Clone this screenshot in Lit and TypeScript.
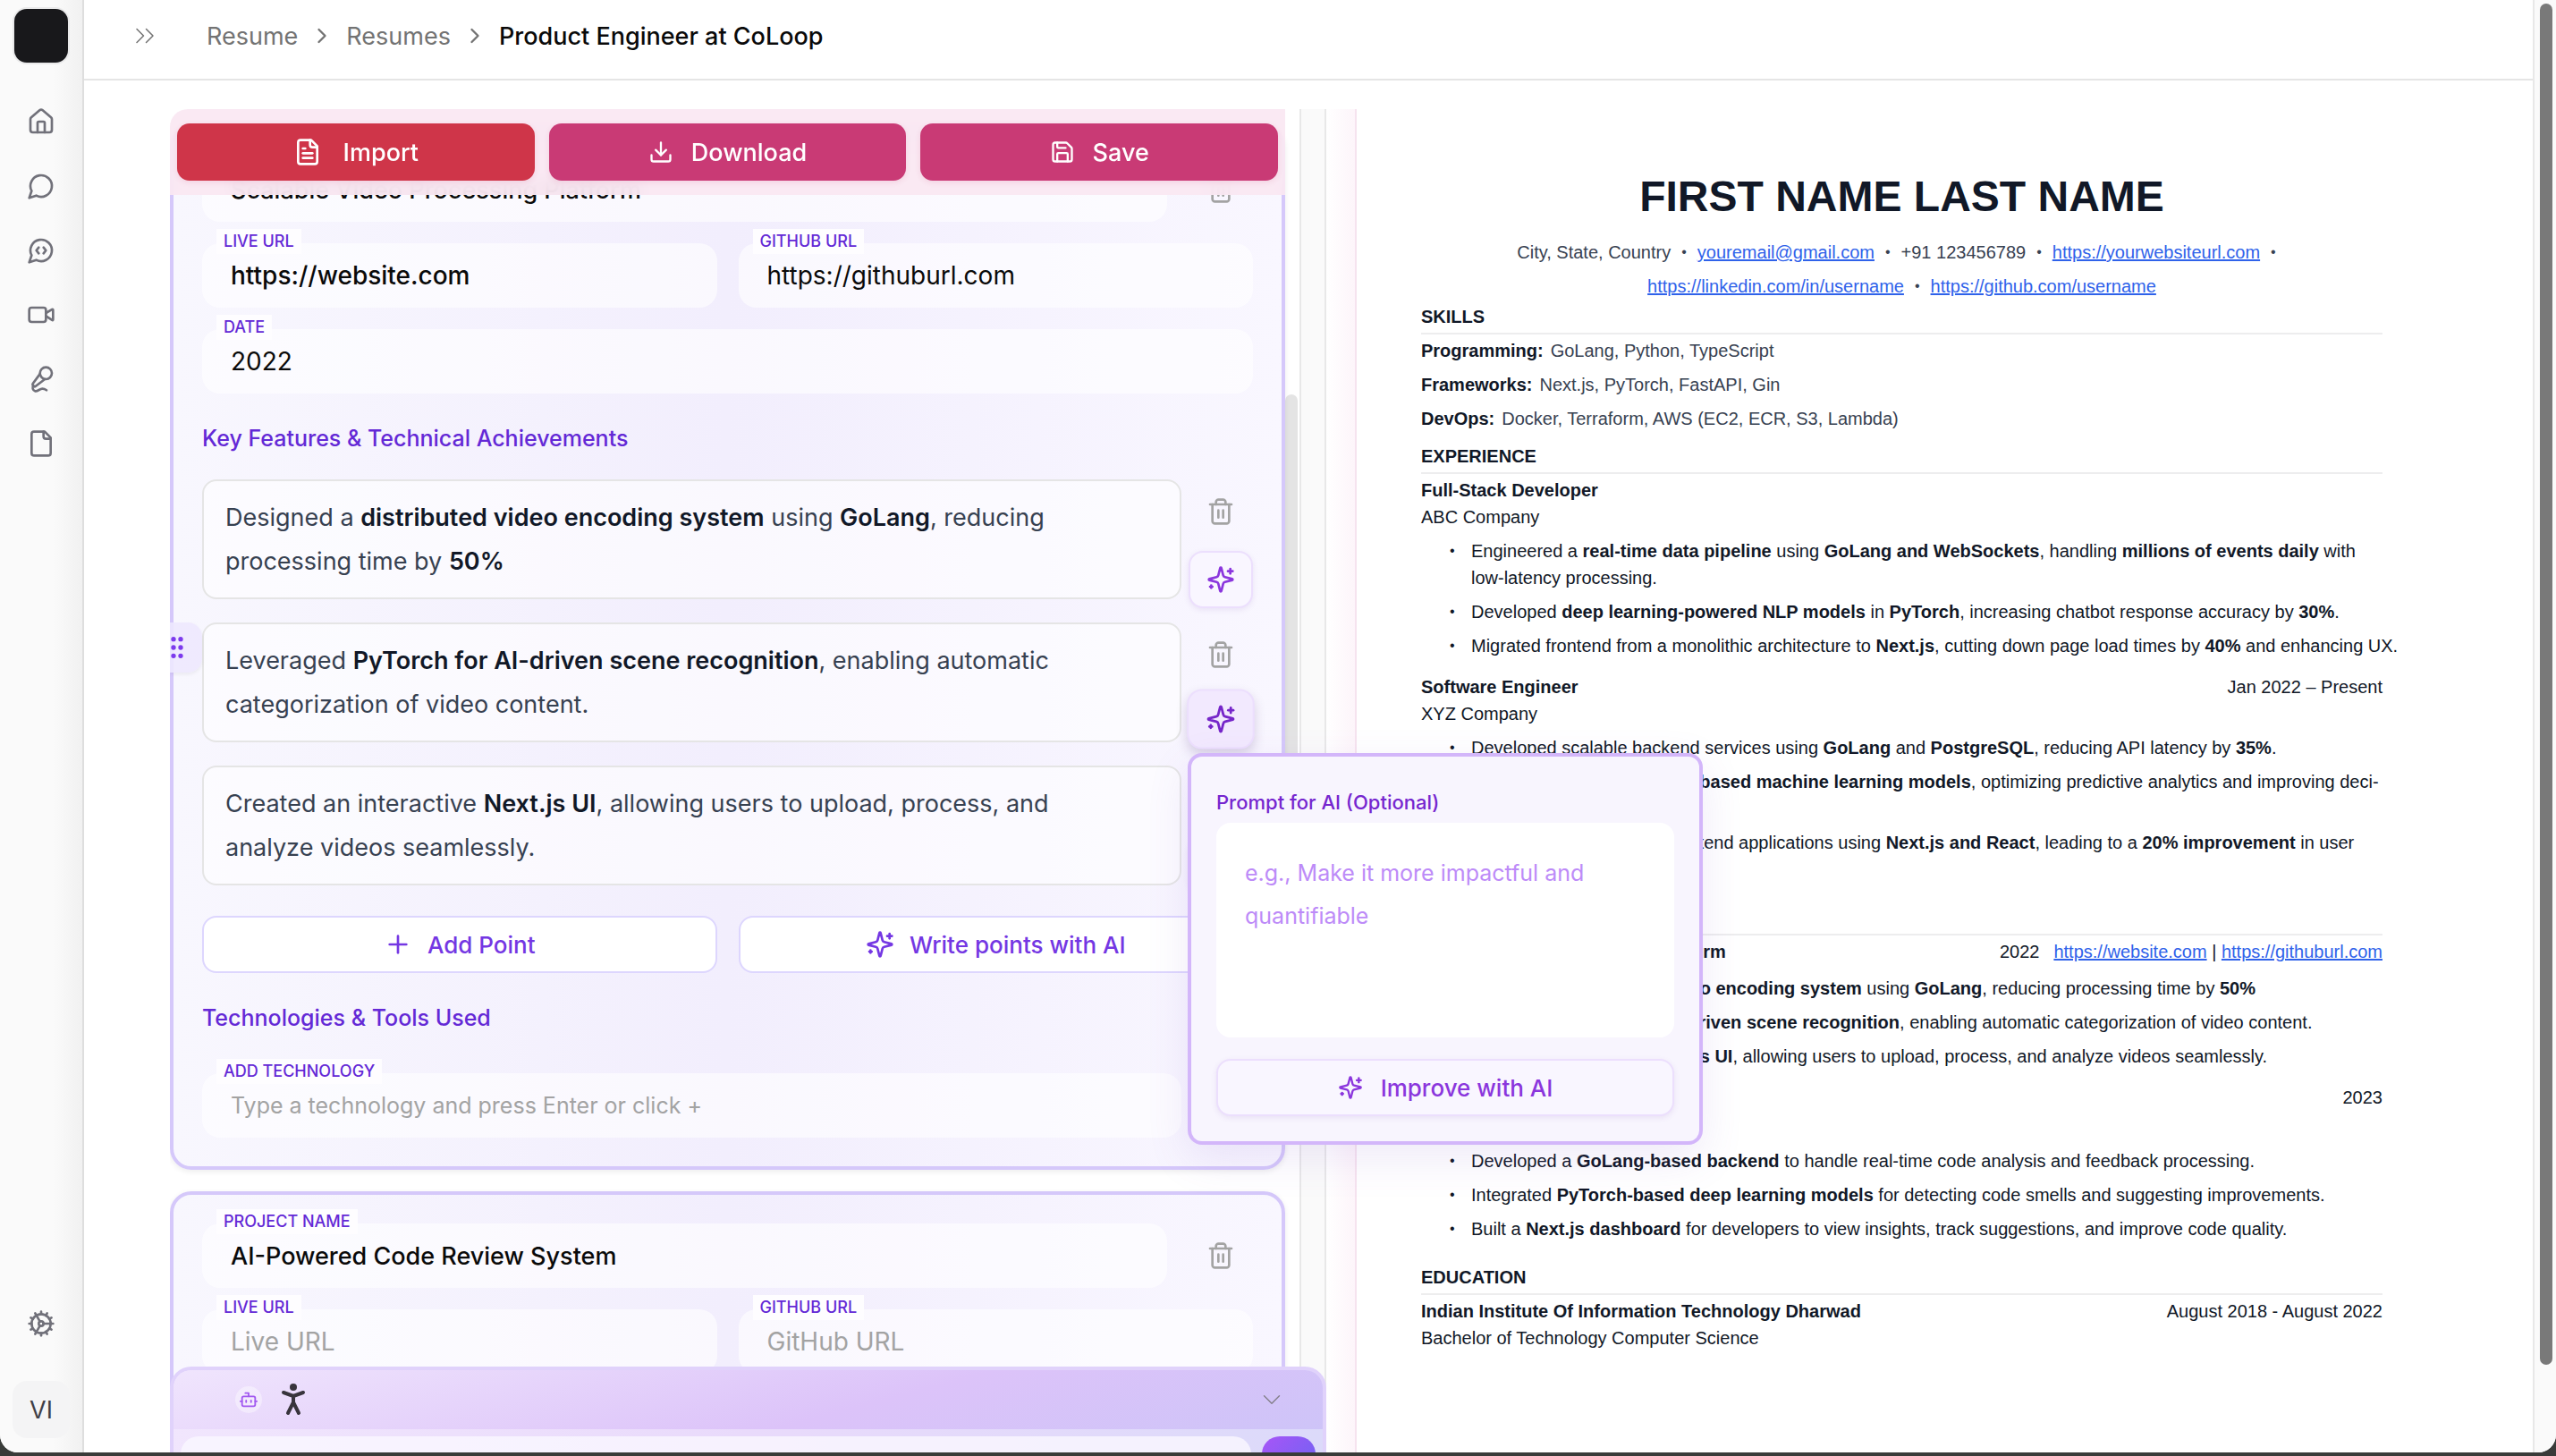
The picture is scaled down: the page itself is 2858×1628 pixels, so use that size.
import { LitElement, html, css, svg, nothing, type TemplateResult } from "lit";
import { customElement, property } from "lit/decorators.js";
import { classMap } from "lit/directives/class-map.js";

const ICONS = {
  house: svg`<path d="M15 21v-8a1 1 0 0 0-1-1h-4a1 1 0 0 0-1 1v8"/><path d="M3 10a2 2 0 0 1 .709-1.528l7-5.999a2 2 0 0 1 2.582 0l7 5.999A2 2 0 0 1 21 10v9a2 2 0 0 1-2 2H5a2 2 0 0 1-2-2z"/>`,
  message: svg`<path d="M7.9 20A9 9 0 1 0 4 16.1L2 22Z"/>`,
  messageCode: svg`<path d="M10 9.5 8 12l2 2.5"/><path d="m14 9.5 2 2.5-2 2.5"/><path d="M7.9 20A9 9 0 1 0 4 16.1L2 22Z"/>`,
  video: svg`<path d="m16 13 5.223 3.482a.5.5 0 0 0 .777-.416V7.87a.5.5 0 0 0-.752-.432L16 10.5"/><rect x="2" y="6" width="14" height="12" rx="2"/>`,
  mic: svg`<path d="m11 7.601-5.994 8.19a1 1 0 0 0 .1 1.298l.817.818a1 1 0 0 0 1.314.087L15.09 12"/><path d="M16.5 21.174C15.5 20.5 14.372 20 13 20c-2.058 0-3.928 2.356-6 2-2.072-.356-2.775-3.369-1.5-4.5"/><circle cx="16" cy="7" r="5"/>`,
  file: svg`<path d="M15 2H6a2 2 0 0 0-2 2v16a2 2 0 0 0 2 2h12a2 2 0 0 0 2-2V7Z"/><path d="M14 2v4a2 2 0 0 0 2 2h4"/>`,
  fileText: svg`<path d="M15 2H6a2 2 0 0 0-2 2v16a2 2 0 0 0 2 2h12a2 2 0 0 0 2-2V7Z"/><path d="M14 2v4a2 2 0 0 0 2 2h4"/><path d="M10 9H8"/><path d="M16 13H8"/><path d="M16 17H8"/>`,
  cog: svg`<path d="M12 20a8 8 0 1 0 0-16 8 8 0 0 0 0 16Z"/><path d="M12 14a2 2 0 1 0 0-4 2 2 0 0 0 0 4Z"/><path d="M12 2v2"/><path d="M12 22v-2"/><path d="m17 20.66-1-1.73"/><path d="M11 10.27 7 3.34"/><path d="m20.66 17-1.73-1"/><path d="m3.34 7 1.73 1"/><path d="M14 12h8"/><path d="M2 12h2"/><path d="m20.66 7-1.73 1"/><path d="m3.34 17 1.73-1"/><path d="m17 3.34-1 1.73"/><path d="m11 13.73-4 6.93"/>`,
  chevronsRight: svg`<path d="m6 17 5-5-5-5"/><path d="m13 17 5-5-5-5"/>`,
  chevronRight: svg`<path d="m9 18 6-6-6-6"/>`,
  chevronDown: svg`<path d="m6 9 6 6 6-6"/>`,
  download: svg`<path d="M21 15v4a2 2 0 0 1-2 2H5a2 2 0 0 1-2-2v-4"/><path d="m7 10 5 5 5-5"/><path d="M12 15V3"/>`,
  save: svg`<path d="M15.2 3a2 2 0 0 1 1.4.6l3.8 3.8a2 2 0 0 1 .6 1.4V19a2 2 0 0 1-2 2H5a2 2 0 0 1-2-2V5a2 2 0 0 1 2-2z"/><path d="M17 21v-7a1 1 0 0 0-1-1H8a1 1 0 0 0-1 1v7"/><path d="M7 3v4a1 1 0 0 0 1 1h7"/>`,
  trash: svg`<path d="M3 6h18"/><path d="M19 6v14c0 1-1 2-2 2H7c-1 0-2-1-2-2V6"/><path d="M8 6V4c0-1 1-2 2-2h4c1 0 2 1 2 2v2"/><path d="M10 11v6"/><path d="M14 11v6"/>`,
  sparkles: svg`<path d="M9.937 15.5A2 2 0 0 0 8.5 14.063l-6.135-1.582a.5.5 0 0 1 0-.962L8.5 9.936A2 2 0 0 0 9.937 8.5l1.582-6.135a.5.5 0 0 1 .963 0L14.063 8.5A2 2 0 0 0 15.5 9.937l6.135 1.581a.5.5 0 0 1 0 .964L15.5 14.063a2 2 0 0 0-1.437 1.437l-1.582 6.135a.5.5 0 0 1-.963 0z"/><path d="M20 3v4"/><path d="M22 5h-4"/><path d="M4 17v2"/><path d="M5 18H3"/>`,
  plus: svg`<path d="M5 12h14"/><path d="M12 5v14"/>`,
  grip: svg`<circle cx="9" cy="12" r="1"/><circle cx="9" cy="5" r="1"/><circle cx="9" cy="19" r="1"/><circle cx="15" cy="12" r="1"/><circle cx="15" cy="5" r="1"/><circle cx="15" cy="19" r="1"/>`,
  bot: svg`<path d="M12 8V4H8"/><rect width="16" height="12" x="4" y="8" rx="2"/><path d="M2 14h2"/><path d="M20 14h2"/><path d="M15 13v2"/><path d="M9 13v2"/>`,
};

type IconName = keyof typeof ICONS;

const icon = (name: IconName, size = 32, stroke = 2) => html`<svg
  width=${size}
  height=${size}
  viewBox="0 0 24 24"
  fill="none"
  stroke="currentColor"
  stroke-width=${stroke}
  stroke-linecap="round"
  stroke-linejoin="round"
  aria-hidden="true"
>${ICONS[name]}</svg>`;

const reset = css`
  :host,
  *,
  *::before,
  *::after {
    box-sizing: border-box;
  }
  button,
  input,
  textarea {
    font: inherit;
    color: inherit;
    margin: 0;
    border: 0;
    background: none;
    outline: none;
  }
  svg {
    display: block;
    flex: none;
  }
  a {
    color: inherit;
  }
  h1, h2, h3, p, ul {
    margin: 0;
    padding: 0;
  }
`;

@customElement("side-nav")
class SideNav extends LitElement {
  static styles = [
    reset,
    css`
      :host {
        display: flex;
        flex-direction: column;
        align-items: center;
        flex: none;
        width: 94px;
        padding: 10px 0 16px;
        border-right: 2px solid #dedede;
        background: linear-gradient(to right, #fafafa 65%, #f1f1f1);
        color: #71717a;
      }
      .logo {
        width: 60px;
        height: 60px;
        border-radius: 14px;
        background: #18181b;
        box-shadow: 0 0 0 2px #e9e9ea;
      }
      .links {
        display: flex;
        flex-direction: column;
        gap: 40px;
        margin-top: 50px;
        flex: 1;
      }
      .settings {
        margin-bottom: 48px;
      }
      .avatar {
        width: 64px;
        height: 64px;
        border-radius: 16px;
        background: #f4f4f5;
        color: #3f3f46;
        font-size: 27px;
      }
    `,
  ];

  render() {
    const links: [IconName, string][] = [
      ["house", "Home"],
      ["message", "Chat"],
      ["messageCode", "Code chat"],
      ["video", "Video"],
      ["mic", "Interview"],
      ["file", "Documents"],
    ];
    return html`
      <div class="logo"></div>
      <nav class="links">
        ${links.map(([name, label]) => html`<a href="#" aria-label=${label}>${icon(name)}</a>`)}
      </nav>
      <a class="settings" href="#" aria-label="Settings">${icon("cog")}</a>
      <button class="avatar">VI</button>
    `;
  }
}

@customElement("top-bar")
class TopBar extends LitElement {
  static styles = [
    reset,
    css`
      :host {
        display: flex;
        align-items: center;
        flex: none;
        height: 90px;
        padding: 0 50px 8px;
        border-bottom: 2px solid #e5e5e5;
        color: #737373;
        font-size: 27px;
      }
      .toggle {
        padding: 0;
      }
      .crumbs {
        display: flex;
        align-items: center;
        gap: 13px;
        margin-left: 51px;
      }
      .crumbs a {
        text-decoration: none;
      }
      .current {
        color: #0a0a0a;
        font-weight: 500;
      }
    `,
  ];

  render() {
    return html`
      <button class="toggle" aria-label="Expand sidebar">${icon("chevronsRight", 36, 1)}</button>
      <nav class="crumbs">
        <a href="#">Resume</a>${icon("chevronRight", 28, 2)}
        <a href="#">Resumes</a>${icon("chevronRight", 28, 2)}
        <span class="current">Product Engineer at CoLoop</span>
      </nav>
    `;
  }
}

@customElement("text-field")
class TextField extends LitElement {
  @property() label = "";
  @property() value = "";
  @property() placeholder = "";
  @property() size: "small" | "medium" | "large" = "large";
  @property({ type: Boolean }) strong = false;

  static styles = [
    reset,
    css`
      :host {
        display: block;
        position: relative;
        min-width: 0;
      }
      label {
        position: absolute;
        left: 16px;
        top: -16px;
        padding: 0 8px;
        background: #fefdff;
        color: #6429d6;
        font-size: 18px;
        font-weight: 500;
        line-height: 28px;
        text-transform: uppercase;
      }
      input {
        display: block;
        width: 100%;
        height: 72px;
        padding: 0 32px;
        border-radius: 20px;
        background: rgba(255, 255, 255, 0.6);
        color: #0a0a0a;
        font-size: 28px;
      }
      input.strong {
        font-weight: 500;
      }
      input.medium {
        font-size: 27px;
      }
      input.small {
        font-size: 25px;
      }
      input::placeholder {
        color: #a3a3a3;
        opacity: 1;
      }
    `,
  ];

  render() {
    return html`
      <input
        id="field"
        type="text"
        class=${classMap({ strong: this.strong, [this.size]: true })}
        .value=${this.value}
        placeholder=${this.placeholder || nothing}
      />
      <label for="field">${this.label}</label>
    `;
  }
}

interface Point {
  body: TemplateResult;
  active?: boolean;
}

const POINTS: Point[] = [
  { body: html`Designed a <b>distributed video encoding system</b> using <b>GoLang</b>, reducing processing time by <b>50%</b>` },
  { body: html`Leveraged <b>PyTorch for AI-driven scene recognition</b>, enabling automatic categorization of video content.`, active: true },
  { body: html`Created an interactive <b>Next.js UI</b>, allowing users to upload, process, and analyze videos seamlessly.` },
];

@customElement("resume-editor")
class ResumeEditor extends LitElement {
  static styles = [
    reset,
    css`
      :host {
        display: flex;
        flex-direction: column;
        position: relative;
        min-width: 0;
        min-height: 0;
      }
      .toolbar {
        display: grid;
        grid-template-columns: repeat(3, 1fr);
        gap: 16px;
        position: absolute;
        z-index: 2;
        top: 0;
        left: 0;
        right: 16px;
        padding: 16px 8px;
        border-top-left-radius: 20px;
        background: rgba(250, 231, 242, 0.92);
        backdrop-filter: blur(8px);
      }
      .toolbar button {
        display: flex;
        align-items: center;
        justify-content: center;
        gap: 20px;
        height: 64px;
        border-radius: 14px;
        background: #c93a75;
        box-shadow: 0 2px 6px rgba(190, 30, 90, 0.12);
        color: #fff;
        font-size: 27px;
        font-weight: 500;
      }
      .toolbar .import {
        gap: 24px;
        background: #cf3549;
      }
      .scroll {
        display: flex;
        flex: 1;
        min-height: 0;
        overflow: hidden;
      }
      .cards {
        display: flex;
        flex-direction: column;
        gap: 24px;
        flex: 1;
        min-width: 0;
        padding-top: 18px;
      }
      .gutter {
        flex: none;
        width: 16px;
        padding-top: 319px;
      }
      .thumb {
        width: 14px;
        height: 640px;
        border-radius: 7px;
        background: #e4e4e4;
      }
      .card {
        display: flex;
        flex-direction: column;
        gap: 24px;
        flex: none;
        position: relative;
        padding: 32px;
        border: 4px solid #d5c8fa;
        border-radius: 24px;
        background: linear-gradient(to right, #f8f7fe, #f2eefd 50%, #f9f7ff);
        box-shadow: 0 2px 6px rgba(0, 0, 0, 0.08);
      }
      .name-row {
        display: grid;
        grid-template-columns: 1fr 72px;
        gap: 24px;
        align-items: center;
      }
      .pair {
        display: grid;
        grid-template-columns: 1fr 1fr;
        gap: 24px;
      }
      h3 {
        padding-top: 4px;
        color: #6429d6;
        font-size: 25px;
        font-weight: 500;
        line-height: 44px;
      }
      .points {
        display: flex;
        flex-direction: column;
        gap: 16px;
      }
      .tech {
        padding-top: 16px;
        padding-right: 80px;
      }
      .point {
        display: grid;
        grid-template-columns: 1fr 72px;
        gap: 8px;
        align-items: start;
        position: relative;
      }
      .text {
        padding: 16px 56px 16px 24px;
        border: 2px solid #e5e5e5;
        border-radius: 16px;
        background: rgba(255, 255, 255, 0.6);
        color: #374151;
        font-size: 27px;
        line-height: 49px;
      }
      .text b {
        color: #111827;
        font-weight: 600;
      }
      .handle {
        display: flex;
        align-items: center;
        position: absolute;
        left: -36px;
        top: 0;
        width: 36px;
        height: 56px;
        padding: 0;
        border-radius: 0 16px 16px 0;
        background: rgba(237, 232, 254, 0.9);
        box-shadow: 0 2px 4px rgba(0, 0, 0, 0.06);
        color: #7c3aed;
      }
      .handle svg {
        margin-left: -8px;
      }
      .actions {
        display: flex;
        flex-direction: column;
        gap: 12px;
        padding-top: 4px;
      }
      .icon-btn {
        display: flex;
        align-items: center;
        justify-content: center;
        height: 64px;
        padding: 0;
        border-radius: 16px;
        color: #a3a3a3;
      }
      .icon-btn.ai {
        border: 2px solid #ecdffd;
        background: #f9f6ff;
        box-shadow: 0 2px 6px rgba(100, 50, 160, 0.1);
        color: #8b36dd;
      }
      .icon-btn.ai.active {
        background: #f2e9fe;
        box-shadow: 0 6px 12px rgba(60, 30, 100, 0.18);
        color: #7626c9;
        transform: translateY(-4px) scale(1.05);
      }
      .outline {
        display: flex;
        align-items: center;
        justify-content: center;
        gap: 17px;
        height: 64px;
        border: 2px solid #ddd6fe;
        border-radius: 16px;
        background: #fff;
        color: #7437e3;
        font-size: 26px;
        font-weight: 500;
      }
      .assistant {
        position: absolute;
        z-index: 2;
        left: 0;
        right: -30px;
        bottom: 0;
        border: 4px solid #e0d2fb;
        border-bottom: 0;
        border-radius: 24px 24px 0 0;
        background: linear-gradient(100deg, #f1e6fd, #e9dafb 50%, #dcdafa);
        overflow: hidden;
      }
      .assistant-head {
        display: flex;
        align-items: center;
        gap: 20px;
        height: 66px;
        padding: 0 40px 0 69px;
        background: linear-gradient(165deg, #f0e5fd, #dcc3f9 60%, #cec4f8);
        color: #38343c;
      }
      .bot {
        display: flex;
        align-items: center;
        justify-content: center;
        width: 30px;
        height: 30px;
        border-radius: 50%;
        background: rgba(255, 255, 255, 0.4);
        color: #a259f0;
      }
      .collapse {
        margin-left: auto;
        padding: 0;
        color: #85808c;
      }
      .assistant-body {
        display: grid;
        grid-template-columns: 1fr 60px;
        gap: 12px;
        height: 26px;
        padding: 8px 8px 0;
      }
      .assistant-body input,
      .send {
        height: 60px;
        border-radius: 20px;
      }
      .assistant-body input {
        width: 100%;
        padding: 0 24px;
        background: rgba(250, 248, 255, 0.8);
      }
      .send {
        background: linear-gradient(135deg, #a855f7, #6366f1);
      }
      .popup {
        display: flex;
        flex-direction: column;
        position: absolute;
        z-index: 3;
        left: calc(100% - 125px);
        top: 720px;
        width: 576px;
        padding: 28px;
        border: 4px solid #d3b6fa;
        border-radius: 16px;
        background: #f8f5fe;
        box-shadow: 0 16px 48px rgba(120, 80, 200, 0.12);
      }
      .popup label {
        color: #7626cf;
        font-size: 22px;
        font-weight: 500;
        line-height: 46px;
      }
      .popup textarea {
        height: 240px;
        padding: 32px;
        border-radius: 16px;
        background: #fff;
        font-size: 25px;
        line-height: 48px;
        resize: none;
      }
      .popup textarea::placeholder {
        color: #bd8bf8;
        opacity: 1;
      }
      .popup .outline {
        gap: 20px;
        margin-top: 24px;
        border-color: #ecdffd;
        background: #f9f6ff;
        box-shadow: 0 2px 6px rgba(100, 50, 160, 0.1);
        color: #8b36dd;
      }
    `,
  ];

  private pointRow(point: Point) {
    return html`<div class="point">
      ${point.active ? html`<button class="handle" aria-label="Drag to reorder">${icon("grip", 32, 2)}</button>` : nothing}
      <div class="text" role="textbox" contenteditable="true" spellcheck="false" aria-label="Point">${point.body}</div>
      <div class="actions">
        <button class="icon-btn" aria-label="Delete point">${icon("trash")}</button>
        <button class=${classMap({ "icon-btn": true, ai: true, active: !!point.active })} aria-label="Improve with AI">
          ${icon("sparkles")}
        </button>
      </div>
    </div>`;
  }

  private nameRow(value: string) {
    return html`<div class="name-row">
      <text-field label="Project name" .value=${value} size="medium" strong></text-field>
      <button class="icon-btn" aria-label="Delete project">${icon("trash")}</button>
    </div>`;
  }

  render() {
    return html`
      <div class="toolbar">
        <button class="import">${icon("fileText")}Import</button>
        <button>${icon("download", 28)}Download</button>
        <button>${icon("save", 28)}Save</button>
      </div>
      <div class="scroll">
        <div class="cards">
          <section class="card">
            ${this.nameRow("Scalable Video Processing Platform")}
            <div class="pair">
              <text-field label="Live URL" value="https://website.com" strong></text-field>
              <text-field label="GitHub URL" value="https://githuburl.com"></text-field>
            </div>
            <text-field label="Date" value="2022"></text-field>
            <h3>Key Features &amp; Technical Achievements</h3>
            <div class="points">${POINTS.map((p) => this.pointRow(p))}</div>
            <div class="pair">
              <button class="outline">${icon("plus")}Add Point</button>
              <button class="outline">${icon("sparkles")}Write points with AI</button>
            </div>
            <h3>Technologies &amp; Tools Used</h3>
            <div class="tech">
              <text-field label="Add technology" placeholder="Type a technology and press Enter or click +" size="small"></text-field>
            </div>
          </section>
          <section class="card">
            ${this.nameRow("AI-Powered Code Review System")}
            <div class="pair">
              <text-field label="Live URL" placeholder="Live URL"></text-field>
              <text-field label="GitHub URL" placeholder="GitHub URL"></text-field>
            </div>
          </section>
        </div>
        <div class="gutter"><div class="thumb"></div></div>
      </div>
      <div class="assistant">
        <div class="assistant-head">
          <span class="bot">${icon("bot", 22, 2)}</span>
          <svg width="30" height="36" viewBox="0 0 30 36" fill="none" stroke="currentColor" stroke-width="4" stroke-linecap="round" stroke-linejoin="round" aria-hidden="true">
            <circle cx="15" cy="4" r="4" fill="currentColor" stroke="none" />
            <path d="M4 10l11 4 11-4M15 14v8M9 33l6-12 6 12" />
          </svg>
          <button class="collapse" aria-label="Collapse assistant">${icon("chevronDown", 34, 1)}</button>
        </div>
        <div class="assistant-body">
          <input type="text" aria-label="Message" />
          <button class="send" aria-label="Send"></button>
        </div>
      </div>
      <div class="popup">
        <label for="prompt">Prompt for AI (Optional)</label>
        <textarea id="prompt" placeholder="e.g., Make it more impactful and quantifiable"></textarea>
        <button class="outline">${icon("sparkles", 28)}Improve with AI</button>
      </div>
    `;
  }
}

@customElement("resume-preview")
class ResumePreview extends LitElement {
  static styles = [
    reset,
    css`
      :host {
        display: block;
        min-width: 0;
        padding-left: 32px;
        background: linear-gradient(to right, #fff, #fdf5fa 32px, #fff 32px);
      }
      .page {
        height: 100%;
        padding: 70px 72px 0;
        border-left: 2px solid #f6e3ef;
        background: #fff;
        color: #111827;
        font-family: "Liberation Sans", Arial, sans-serif;
        font-size: 20px;
        line-height: 30px;
      }
      h1 {
        font-size: 48px;
        line-height: 56px;
        text-align: center;
      }
      .contact {
        display: flex;
        flex-wrap: wrap;
        justify-content: center;
        margin-top: 15px;
        color: #374151;
        line-height: 38px;
      }
      .dot {
        margin: 0 12px;
        font-size: 16px;
      }
      a {
        color: #2f62ea;
      }
      h2 {
        padding-bottom: 3px;
        margin-bottom: 3px;
        border-bottom: 2px solid #ededee;
        font-size: 20px;
        line-height: 30px;
      }
      section {
        padding-bottom: 8px;
      }
      .skills {
        padding-bottom: 4px;
      }
      .skills p {
        margin-bottom: 8px;
        color: #374151;
      }
      .skills b {
        margin-right: 8px;
        color: #111827;
      }
      .item {
        padding-bottom: 8px;
      }
      .head {
        display: flex;
        justify-content: space-between;
      }
      .links {
        display: flex;
        gap: 16px;
      }
      ul {
        margin-top: 8px;
        margin-right: -8px;
        list-style: none;
      }
      .projects ul {
        margin-top: 11px;
      }
      .projects .narrow b {
        max-width: 300px;
      }
      li {
        position: relative;
        margin-bottom: 8px;
        padding-left: 56px;
      }
      li.single {
        white-space: nowrap;
      }
      li::before {
        content: "•";
        position: absolute;
        left: 32px;
        font-size: 16px;
      }
    `,
  ];

  render() {
    const dot = html`<span class="dot">•</span>`;
    return html`<article class="page">
      <h1>FIRST NAME LAST NAME</h1>
      <div class="contact">
        <span>City, State, Country</span>${dot}
        <a href="#">youremail@gmail.com</a>${dot}
        <span>+91 123456789</span>${dot}
        <a href="#">https://yourwebsiteurl.com</a>${dot}
        <a href="#">https://linkedin.com/in/username</a>${dot}
        <a href="#">https://github.com/username</a>
      </div>
      <section class="skills">
        <h2>SKILLS</h2>
        <p><b>Programming:</b>GoLang, Python, TypeScript</p>
        <p><b>Frameworks:</b>Next.js, PyTorch, FastAPI, Gin</p>
        <p><b>DevOps:</b>Docker, Terraform, AWS (EC2, ECR, S3, Lambda)</p>
      </section>
      <section>
        <h2>EXPERIENCE</h2>
        <div class="item">
          <div class="head"><b>Full-Stack Developer</b></div>
          <p>ABC Company</p>
          <ul>
            <li>Engineered a <b>real-time data pipeline</b> using <b>GoLang and WebSockets</b>, handling <b>millions of events daily</b> with low-latency processing.</li>
            <li>Developed <b>deep learning-powered NLP models</b> in <b>PyTorch</b>, increasing chatbot response accuracy by <b>30%</b>.</li>
            <li class="single">Migrated frontend from a monolithic architecture to <b>Next.js</b>, cutting down page load times by <b>40%</b> and enhancing UX.</li>
          </ul>
        </div>
        <div class="item">
          <div class="head"><b>Software Engineer</b><span>Jan 2022 – Present</span></div>
          <p>XYZ Company</p>
          <ul>
            <li>Developed scalable backend services using <b>GoLang</b> and <b>PostgreSQL</b>, reducing API latency by <b>35%</b>.</li>
            <li>Built and deployed <b>PyTorch-based machine learning models</b>, optimizing predictive analytics and improving deci&shy;sion-making.</li>
            <li>Designed and optimized frontend applications using <b>Next.js and React</b>, leading to a <b>20% improvement</b> in user engagement.</li>
          </ul>
        </div>
      </section>
      <section class="projects">
        <h2>PROJECTS</h2>
        <div class="item">
          <div class="head">
            <b>Scalable Video Processing Platform</b>
            <span class="links"><span>2022</span><span><a href="#">https://website.com</a> | <a href="#">https://githuburl.com</a></span></span>
          </div>
          <ul>
            <li>Designed a <b>distributed video encoding system</b> using <b>GoLang</b>, reducing processing time by <b>50%</b></li>
            <li>Leveraged <b>PyTorch for AI-driven scene recognition</b>, enabling automatic categorization of video content.</li>
            <li>Created an interactive <b>Next.js UI</b>, allowing users to upload, process, and analyze videos seamlessly.</li>
          </ul>
        </div>
        <div class="item">
          <div class="head narrow"><b>AI-Powered Code Review System</b><span>2023</span></div>
          <ul>
            <li>Developed a <b>GoLang-based backend</b> to handle real-time code analysis and feedback processing.</li>
            <li>Integrated <b>PyTorch-based deep learning models</b> for detecting code smells and suggesting improvements.</li>
            <li>Built a <b>Next.js dashboard</b> for developers to view insights, track suggestions, and improve code quality.</li>
          </ul>
        </div>
      </section>
      <section>
        <h2>EDUCATION</h2>
        <div class="head"><b>Indian Institute Of Information Technology Dharwad</b><span>August 2018 - August 2022</span></div>
        <p>Bachelor of Technology Computer Science</p>
      </section>
    </article>`;
  }
}

@customElement("app-root")
class AppRoot extends LitElement {
  static styles = [
    reset,
    css`
      :host {
        display: block;
        height: 100vh;
        overflow: hidden;
        padding-bottom: 4px;
        background: #393b39;
        font-family: Inter, "Liberation Sans", sans-serif;
      }
      .window {
        display: flex;
        height: 100%;
        border-radius: 0 0 20px 20px;
        background: #fff;
        overflow: hidden;
      }
      main {
        display: flex;
        flex-direction: column;
        flex: 1;
        min-width: 0;
      }
      .workspace {
        display: grid;
        grid-template-columns: 1263fr 30px 1253fr;
        grid-template-rows: minmax(0, 1fr);
        flex: 1;
        min-height: 0;
        padding: 32px 96px 0;
      }
      resume-editor {
        z-index: 1;
      }
      .divider {
        border: solid #e8e8e8;
        border-width: 0 2px;
        background: #fafafa;
      }
      .track {
        flex: none;
        width: 26px;
        padding: 4px 0 98px 6px;
        border-left: 2px solid #e8e8e8;
        background: #fafafa;
      }
      .thumb {
        width: 14px;
        height: 100%;
        border-radius: 7px;
        background: #797979;
      }
    `,
  ];

  render() {
    return html`<div class="window">
      <side-nav></side-nav>
      <main>
        <top-bar></top-bar>
        <div class="workspace">
          <resume-editor></resume-editor>
          <div class="divider"></div>
          <resume-preview></resume-preview>
        </div>
      </main>
      <div class="track"><div class="thumb"></div></div>
    </div>`;
  }
}
